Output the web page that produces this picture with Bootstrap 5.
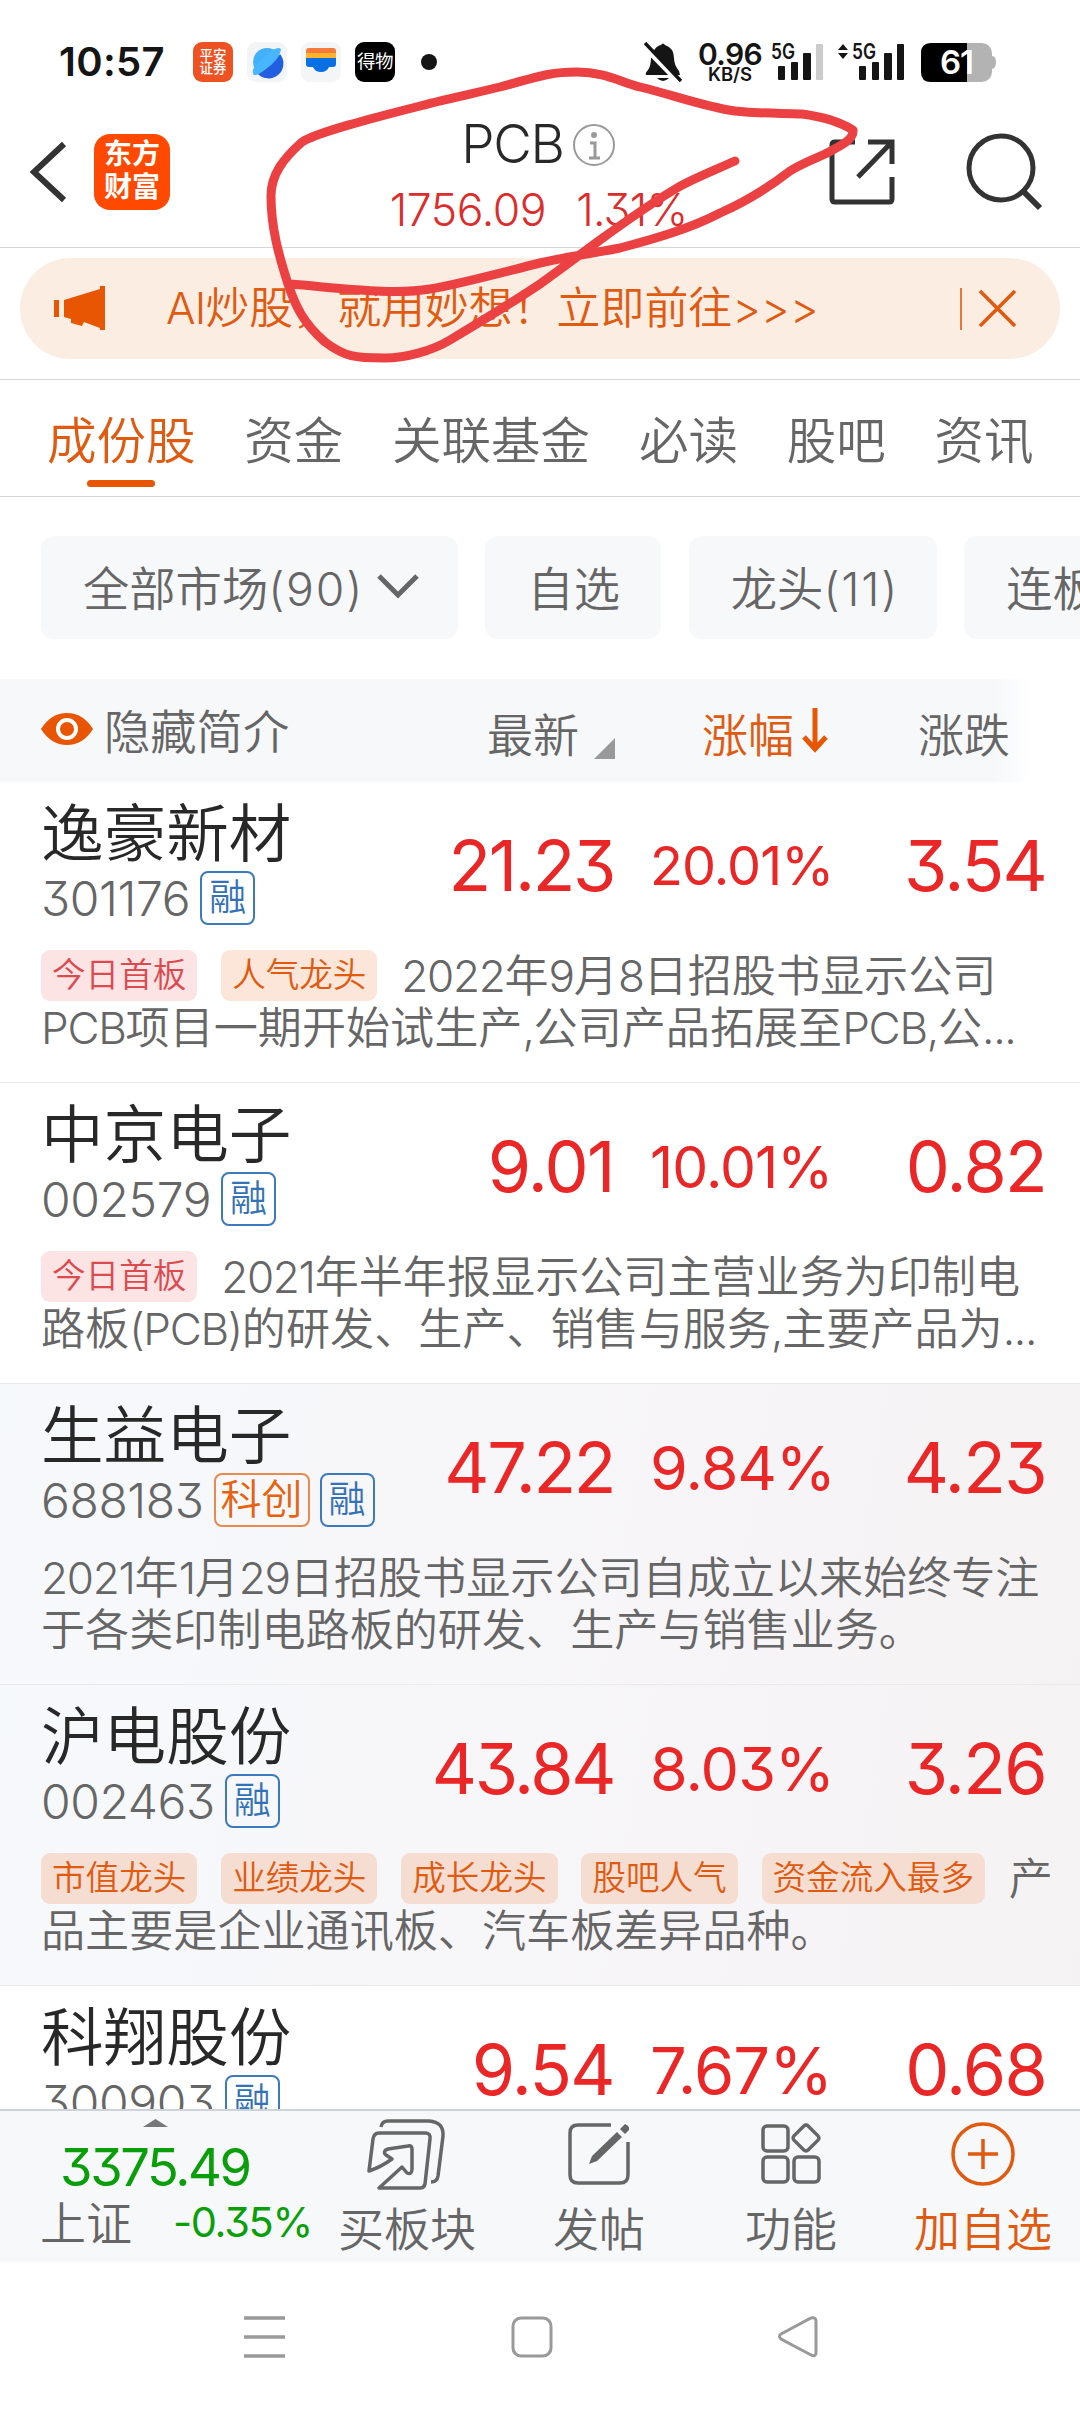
<!DOCTYPE html>
<html lang="zh-CN">
<head>
<meta charset="utf-8">
<meta name="viewport" content="width=device-width, initial-scale=1">
<title>PCB</title>
<link rel="stylesheet" href="https://cdn.jsdelivr.net/npm/bootstrap@5.3.0/dist/css/bootstrap.min.css">
<style>
:root{--ink:#282828;--soft:#666;--orange:#e05a10;--red:#ea2626;--green:#0a9f0a;--pale:#f6f8fa}
body{width:1080px;height:2412px;overflow:hidden;background:#fff;color:var(--soft);font-family:Inter,"Noto Sans CJK SC",sans-serif;font-feature-settings:"cv09";line-height:1;font-weight:350}
svg{display:block;flex:none;overflow:visible}
.tx{white-space:nowrap}
.statusbar{height:100px;padding:42px 85px 18px 59px;color:#151515}
.clock{font-size:40px;font-weight:600;width:134px;letter-spacing:.3px;line-height:40px}
.appicon{width:40px;height:40px;border-radius:9px;margin-right:14px}
.pa{background:#ee5122;color:#fff;font-size:13.5px;line-height:13px;font-weight:500;text-align:center;padding-top:7px}
.dw{background:#000;color:#fff;font-size:18.5px;line-height:38px;letter-spacing:-.5px;text-align:center;font-weight:400}
.rate{width:66px;text-align:center;margin-left:14px;font-weight:600}
.rate div{font-size:30px;line-height:24px;letter-spacing:-.6px}
.rate small{display:block;font-size:18.5px;line-height:17px;font-weight:600}
.topbar{height:148px;border-bottom:1px solid #d6d6d6;padding:0 40px 0 30px}
.back{margin-top:41px}
.logo{width:76px;height:76px;border-radius:16px;background:#ff4800;color:#fff;font-size:28px;line-height:33px;font-weight:700;text-align:center;padding-top:4px;margin:34px 0 0 26px}
.heading{padding:17px 0 0 151px}
.title{font-size:53px;color:var(--ink);letter-spacing:-1.2px;line-height:55px;font-weight:350}
.quote{font-size:44.5px;color:#dd2c2c;line-height:44px;font-weight:350;gap:30px}
.promo{height:132px;padding:10px 20px 0;border-bottom:1px solid #d6d6d6}
.pill{height:101px;border-radius:51px;background:#fcede3;color:var(--orange);font-size:43.9px;padding:0 44px 0 34px;font-weight:350}
.tabs{height:117px;border-bottom:1px solid #d6d6d6;padding-left:47px;gap:48.8px;font-size:49.5px}
.tab-i{height:115px;padding-top:36px;line-height:50px}
.tab-i.on{color:var(--orange)}
.tab-i.on::after{content:"";display:block;width:68px;height:7px;border-radius:4px;background:#e85603;margin:14px auto 0}
.filters{height:182px;padding:39px 0 0 41px;gap:27.4px;overflow:hidden}
.chip{height:103px;border-radius:13px;background:#f7f8fa;flex:none;font-size:46.3px;padding-left:42px;padding-top:4px}
.chip b{font-weight:350;letter-spacing:1.8px}
.thead-r{height:103px;background:linear-gradient(90deg,#f6f8fa 995px,#fff 1032px);padding-left:41px;font-size:46px}
.stock{height:301px;padding:15px 0 0 41px;border-bottom:1px solid #eaeaea;font-weight:350}
.shade{background:linear-gradient(100deg,#f6f9fb,#f7f6f9 45%,#f5f2f3)}
.idcol{width:370px}
.sname{font-size:62.6px;color:var(--ink);line-height:72px;height:74px}
.code{font-size:48px;line-height:55px;height:54px;letter-spacing:-.4px;font-weight:350}
.bdg{height:54px;border:2px solid #3c7abb;border-radius:8px;color:#3472b8;font-size:37px;line-height:49px;padding:0 7px;margin-left:10px;letter-spacing:0;font-weight:350}
.bdg.k{color:#e8610d;border-color:#ea8a50;font-size:41px;padding:0 5px}
.px{width:203px;text-align:right;font-size:70px;letter-spacing:-2.4px;color:var(--red);font-weight:380}
.pc{width:178px;margin-left:36px;color:var(--red);text-align:center;letter-spacing:-.9px;font-weight:390}
.ch{width:218px;text-align:right;font-size:70px;letter-spacing:-1.7px;color:var(--red);font-weight:380}
.nums{height:138px}
.desc{font-size:44.1px;line-height:52px;margin-top:15px;white-space:nowrap}
.desc i{font-style:normal;letter-spacing:-1.3px;font-weight:350}
.tg{display:inline-block;vertical-align:top;height:51px;line-height:49px;border-radius:9px;padding:0 11px;font-size:33.6px;margin-right:23.8px;letter-spacing:0}
.tp{background:#fce3e4;color:#db4a4f}.to{background:#fbe6d9;color:var(--orange)}
.shade .to{background:#f6ddd2}
.list{height:1327px;overflow:hidden}
.dock{height:153px;background:var(--pale);border-top:2px solid #cdd3d8;font-size:46px}
.idx{width:311px;padding-top:8px}
.idx-v{margin:13px 0 0 60px;font-size:52.5px;line-height:54px;letter-spacing:-2.4px;color:var(--green);font-weight:370}
.idx-p{margin-left:41px;font-size:41.5px;letter-spacing:-1.3px;color:var(--green);font-weight:370}
.dk{width:192px;padding-top:7px}
.dk span{line-height:54px;margin-top:16px}
.dk span.up{margin-top:11px}
.sysnav{height:149px;padding:0 262px 0 244px}
.scribble{left:0;top:0;pointer-events:none}
</style>
</head>
<body class="position-relative">
<header class="statusbar d-flex align-items-start tx">
  <div class="clock">10:57</div>
  <div class="appicon pa">平安<br>证券</div>
  <div class="appicon"><svg width="40" height="40"><rect width="40" height="40" rx="9" fill="#f3f4f6"/><circle cx="20" cy="20" r="14" fill="#45b0fa"/><path d="M33 12A14 14 0 0 1 10 31Q26 25 33 12Z" fill="#215ee0"/><path d="M25 8Q34 4 34 8Q32 17 19 27Q6 37 6 31Q5 28 8 24" fill="#48b6fd"/></svg></div>
  <div class="appicon"><svg width="40" height="40"><rect width="40" height="40" rx="9" fill="#f4f5f7"/><path d="M5 13V9Q5 6 8 6H32Q35 6 35 9V13Z" fill="#f47b3c"/><path d="M5 11H35V18H5Z" fill="#fdb32b"/><path d="M5 16H35V22Q35 25 32 25H28Q26 30 20 30T12 25H8Q5 25 5 22Z" fill="#0870e4"/></svg></div>
  <div class="appicon dw">得物</div>
  <svg width="40" height="40"><circle cx="20" cy="20" r="8" fill="#151515"/></svg>
  <div class="ms-auto d-flex">
    <svg width="40" height="40" viewBox="0 0 40 40"><path d="M10 10Q13 4 18 3Q20 0 22 3Q31 6 31 16Q31 23 36 29L37 33H3Q2 31 5 28Q8 24 8 15Z" fill="#151515"/><path d="M14 36H26Q20 42 14 36Z" fill="#151515"/><path d="M0 3L37 41" stroke="#fff" stroke-width="6"/><path d="M2 1L38 39" stroke="#151515" stroke-width="3.4"/></svg>
    <div class="rate"><div>0.96</div><small>KB/S</small></div>
    <svg width="224" height="40" viewBox="0 0 224 40" class="ms-2" font-family="Inter" font-weight="600" font-size="21">
      <g fill="#151515"><text x="0" y="17" textLength="24" lengthAdjust="spacingAndGlyphs">5G</text><rect x="7" y="24" width="7" height="14" rx="1"/><rect x="20" y="20" width="7" height="18" rx="1"/><rect x="32" y="11" width="8" height="27" rx="1"/><rect x="45" y="2" width="7" height="36" rx="1" fill="#ccc"/>
      <path d="M67 8L72 2L77 8ZM67 11L72 17L77 11Z"/><text x="81" y="17" textLength="24" lengthAdjust="spacingAndGlyphs">5G</text><rect x="88" y="24" width="7" height="14" rx="1"/><rect x="101" y="20" width="7" height="18" rx="1"/><rect x="113" y="11" width="8" height="27" rx="1"/><rect x="126" y="2" width="7" height="36" rx="1"/></g>
      <rect x="150" y="1" width="71" height="39" rx="10" fill="#b3b3b3"/><path d="M221 14Q225 14 225 20T221 27Z" fill="#b3b3b3"/><path d="M160 1H196V40H160Q150 40 150 30V11Q150 1 160 1Z" fill="#000"/><text x="169" y="32" font-size="33" fill="#fff" textLength="34">61</text>
    </svg>
  </div>
</header>

<nav class="topbar d-flex align-items-start">
  <svg class="back" width="38" height="62" viewBox="0 0 38 62"><path d="M34 3L4 31L34 59" fill="none" stroke="#333" stroke-width="6"/></svg>
  <div class="logo">东方<br>财富</div>
  <div class="heading flex-fill d-flex flex-column align-items-center tx">
    <div class="d-flex title"><span>PCB</span><svg class="ms-2" style="margin-top:6px" width="44" height="44" viewBox="0 0 44 44" fill="none" stroke="#999" stroke-width="2"><circle cx="22" cy="22" r="20"/><path d="M18 20H23V34M17 35H28" stroke-width="3"/><circle cx="22" cy="12" r="2" fill="#999"/></svg></div>
    <div class="quote d-flex mt-3"><span style="letter-spacing:-.4px">1756.09</span><span style="letter-spacing:-.8px">1.31%</span></div>
  </div>
  <svg style="margin:36px 67px 0 71px" width="70" height="72" viewBox="0 0 70 72" fill="none" stroke="#333" stroke-width="5"><path d="M28 6H8Q5 6 5 9V63Q5 66 8 66H62Q65 66 65 63V41M41 6H65V28M64 7L31 41"/></svg>
  <svg style="margin:32px -2px 0 0" width="78" height="80" viewBox="0 0 78 80" fill="none" stroke="#333" stroke-width="5"><circle cx="37" cy="36" r="32"/><path d="M60 60L76 76" stroke-width="6"/></svg>
</nav>

<section class="promo"><div class="pill d-flex align-items-center tx">
  <svg width="52" height="46" viewBox="0 0 52 46" fill="#e85603"><path d="M0 14H5V31H0ZM10 14L46 3V0H51V44H46V42L30 36L28 40L17 37V33L10 31Z"/></svg>
  <span style="margin-left:60px"><span style="letter-spacing:-.8px">AI</span>炒股，就用妙想！立即前往<span style="letter-spacing:.2px">&gt;&gt;&gt;</span></span>
  <svg class="ms-auto" width="56" height="42" viewBox="0 0 56 42" stroke="#e05a10" fill="none"><path d="M1 0V42" stroke-width="1.6"/><path d="M20 3L55 38M55 3L20 38" stroke-width="3.6"/></svg>
</div></section>

<nav class="tabs d-flex tx"><div class="tab-i on">成份股</div><div class="tab-i">资金</div><div class="tab-i">关联基金</div><div class="tab-i">必读</div><div class="tab-i">股吧</div><div class="tab-i">资讯</div></nav>

<section class="filters d-flex tx">
  <div class="chip d-flex align-items-center" style="width:417px"><span>全部市场<b>(90)</b></span><svg style="margin-left:12px;margin-top:-8px" width="44" height="28" viewBox="0 0 44 28"><path d="M3 4L22 23L41 4" fill="none" stroke="#666" stroke-width="5"/></svg></div>
  <div class="chip d-flex align-items-center" style="width:176px">自选</div>
  <div class="chip d-flex align-items-center" style="width:248px"><span>龙头<b>(11)</b></span></div>
  <div class="chip d-flex align-items-center" style="width:248px">连板</div>
</section>

<section class="thead-r d-flex align-items-center tx">
  <svg style="margin-top:-3px" width="52" height="34" viewBox="0 0 52 34"><path d="M0 17Q10 1 26 1T52 17Q42 33 26 33T0 17Z" fill="#e85603"/><circle cx="26" cy="17" r="9" fill="#e85603" stroke="#fff" stroke-width="4"/></svg>
  <span style="margin-left:11px;width:383px;font-size:46.3px;padding-top:3px">隐藏简介</span>
  <span class="pt-2">最新</span><svg style="margin:36px 0 0 15px" width="21" height="21"><path d="M21 0V21H0Z" fill="#999"/></svg>
  <span class="pt-2" style="margin-left:87px;color:#e05a10">涨幅</span><svg style="margin-left:8px" width="26" height="45" viewBox="0 0 26 45"><path d="M13 0V40M2 29L13 41L24 29" fill="none" stroke="#e85603" stroke-width="5"/></svg>
  <span class="pt-2" style="margin-left:90px">涨跌</span>
</section>

<main class="list">
  <article class="stock"><div class="d-flex"><div class="idcol tx"><div class="sname">逸豪新材</div><div class="code d-flex"><span>301176</span><span class="bdg">融</span></div></div><div class="nums d-flex align-items-center tx"><span class="px">21.23</span><span class="pc" style="font-size:54px">20.01%</span><span class="ch">3.54</span></div></div>
    <div class="desc"><span class="tg tp">今日首板</span><span class="tg to">人气龙头</span><i>2022</i>年<i>9</i>月<i>8</i>日招股书显示公司<br><i>PCB</i>项目一期开始试生产<i>,</i>公司产品拓展至<i>PCB,</i>公<i>...</i></div></article>
  <article class="stock"><div class="d-flex"><div class="idcol tx"><div class="sname">中京电子</div><div class="code d-flex"><span>002579</span><span class="bdg">融</span></div></div><div class="nums d-flex align-items-center tx"><span class="px" style="letter-spacing:-1.6px">9.01</span><span class="pc" style="font-size:57px">10.01%</span><span class="ch">0.82</span></div></div>
    <div class="desc"><span class="tg tp">今日首板</span><i>2021</i>年半年报显示公司主营业务为印制电<br>路板<i>(PCB)</i>的研发、生产、销售与服务<i>,</i>主要产品为<i>...</i></div></article>
  <article class="stock shade"><div class="d-flex"><div class="idcol tx"><div class="sname">生益电子</div><div class="code d-flex"><span>688183</span><span class="bdg k">科创</span><span class="bdg">融</span></div></div><div class="nums d-flex align-items-center tx"><span class="px">47.22</span><span class="pc" style="font-size:61px">9.84%</span><span class="ch">4.23</span></div></div>
    <div class="desc"><i>2021</i>年<i>1</i>月<i>29</i>日招股书显示公司自成立以来始终专注<br>于各类印制电路板的研发、生产与销售业务。</div></article>
  <article class="stock shade"><div class="d-flex"><div class="idcol tx"><div class="sname">沪电股份</div><div class="code d-flex"><span>002463</span><span class="bdg">融</span></div></div><div class="nums d-flex align-items-center tx"><span class="px">43.84</span><span class="pc" style="font-size:61px">8.03%</span><span class="ch">3.26</span></div></div>
    <div class="desc"><span class="tg to">市值龙头</span><span class="tg to">业绩龙头</span><span class="tg to">成长龙头</span><span class="tg to">股吧人气</span><span class="tg to">资金流入最多</span>产<br>品主要是企业通讯板、汽车板差异品种。</div></article>
  <article class="stock"><div class="d-flex"><div class="idcol tx"><div class="sname">科翔股份</div><div class="code d-flex"><span>300903</span><span class="bdg">融</span></div></div><div class="nums d-flex align-items-center tx"><span class="px" style="letter-spacing:-1.6px">9.54</span><span class="pc" style="font-size:65px">7.67%</span><span class="ch">0.68</span></div></div></article>
</main>

<footer>
  <div class="dock d-flex tx">
    <div class="idx">
      <svg style="margin-left:143px" width="25" height="8"><path d="M0 8L12.5 0L25 8Z" fill="#777"/></svg>
      <div class="idx-v">3375.49</div>
      <div class="d-flex align-items-center" style="height:57px;padding-left:40px"><span>上证</span><span class="idx-p">-0.35%</span></div>
    </div>
    <div class="dk d-flex flex-column align-items-center"><svg width="80" height="73" viewBox="0 0 80 73" fill="none" stroke="#666" stroke-width="3.5" stroke-linejoin="round"><path d="M14 9Q15 3 21 3H62Q77 4 76 18L71 58Q70 64 64 64"/><path d="M2 53L6 21Q7 15 12 15H58Q64 15 63 21L58 66Q57 70 53 70H12L35 49L40 55Q45 57 45 51V31Q45 27 41 28L21 31Q15 33 19 37L25 41Q14 49 2 53Z"/></svg><span class="up">买板块</span></div>
    <div class="dk d-flex flex-column align-items-center"><svg style="margin-top:4px" width="64" height="64" viewBox="0 0 64 64" fill="none" stroke="#666" stroke-width="3.5"><path d="M44 3H11Q3 3 3 11V53Q3 61 11 61H53Q61 61 61 53V20"/><path d="M22 42L25 34L50 10L55 15L30 39ZM53 7L58 2Q63 4 62 8L58 12Z" fill="#666" stroke="none"/></svg><span>发帖</span></div>
    <div class="dk d-flex flex-column align-items-center"><svg style="margin-top:4px" width="64" height="64" viewBox="0 0 64 64" fill="none" stroke="#666" stroke-width="3.5"><rect x="4" y="4" width="25" height="25" rx="4"/><rect x="4" y="35" width="25" height="25" rx="4"/><rect x="35" y="35" width="25" height="25" rx="4"/><rect x="37" y="6" width="20" height="20" rx="3" transform="rotate(45 47 16)"/></svg><span>功能</span></div>
    <div class="dk d-flex flex-column align-items-center" style="color:#e05a10"><svg style="margin-top:4px" width="64" height="64" viewBox="0 0 64 64" fill="none" stroke="#e05a10" stroke-width="3.5"><circle cx="32" cy="32" r="30"/><path d="M17 32H47M32 17V47"/></svg><span>加自选</span></div>
  </div>
  <div class="sysnav d-flex align-items-center justify-content-between">
    <svg width="42" height="44" viewBox="0 0 42 44" stroke="#999" stroke-width="3.6"><path d="M0 3H41M0 22H41M0 41H41"/></svg>
    <svg width="42" height="42" viewBox="0 0 42 42"><rect x="2" y="2" width="38" height="38" rx="8" fill="none" stroke="#999" stroke-width="3"/></svg>
    <svg width="40" height="42" viewBox="0 0 40 42"><path d="M3 18L33 2Q38 1 38 5V37Q38 41 33 39L3 23Q0 20 3 18Z" fill="none" stroke="#999" stroke-width="3"/></svg>
  </div>
</footer>

<svg class="scribble position-absolute" width="1080" height="420" viewBox="0 0 1080 420" fill="none" stroke="#ec4143" stroke-width="9" stroke-linecap="round" stroke-linejoin="round"><path d="M735 161C715 170 690 180 677 188C650 204 622 224 600 240C578 256 560 270 540 284C515 301 480 322 450 340C432 351 405 358 385 358C355 358 345 357 325 342C303 323 295 305 288 284C279 256 271 228 271 196C271 174 284 158 302 142C320 131 385 115 420 106C450 98 480 92 500 87C540 76 550 72 577 72C605 72 620 82 640 87C670 94 705 107 735 111C765 114 780 113 802 114C825 117 840 122 853 130C854 140 840 146 825 154C810 161 803 163 790 171C768 188 745 202 720 213C690 229 650 240 620 248C590 254 570 256 540 263C500 273 460 284 430 289C395 295 350 289 290 284"/></svg>
<script src="https://cdn.jsdelivr.net/npm/bootstrap@5.3.0/dist/js/bootstrap.bundle.min.js"></script>
</body>
</html>
